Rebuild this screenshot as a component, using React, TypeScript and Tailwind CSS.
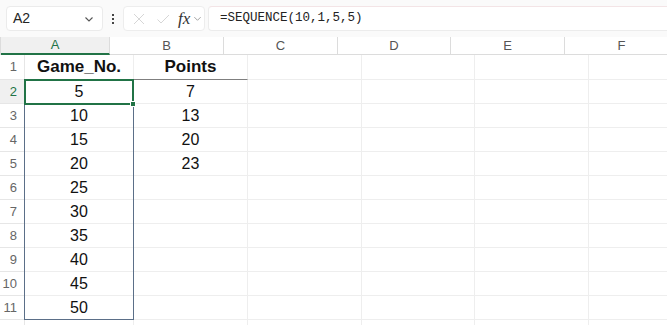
import React from "react";

const cols = [
  { key: "A", w: "w-[109px]" },
  { key: "B", w: "w-[114px]" },
  { key: "C", w: "w-[114px]" },
  { key: "D", w: "w-[113px]" },
  { key: "E", w: "w-[114px]" },
  { key: "F", w: "w-[114px]" },
];

const rows: { n: number; a?: string; b?: string }[] = [
  { n: 1, a: "Game_No.", b: "Points" },
  { n: 2, a: "5", b: "7" },
  { n: 3, a: "10", b: "13" },
  { n: 4, a: "15", b: "20" },
  { n: 5, a: "20", b: "23" },
  { n: 6, a: "25" },
  { n: 7, a: "30" },
  { n: 8, a: "35" },
  { n: 9, a: "40" },
  { n: 10, a: "45" },
  { n: 11, a: "50" },
  { n: 12 },
];

function Toolbar() {
  return (
    <div className="flex h-[37px] items-start bg-[#fafafa] pt-[6px] pl-[6px]">
      <div className="flex h-[25px] w-[97px] items-center justify-between rounded-[4px] border border-[#ebebeb] bg-white pl-[6px] pr-[8px]">
        <span className="text-[14px] text-[#242424]">A2</span>
        <svg width="10" height="10" viewBox="0 0 10 10">
          <path d="M1.5 3.5 L5 7 L8.5 3.5" fill="none" stroke="#555" strokeWidth="1.1" />
        </svg>
      </div>
      <div className="flex h-[25px] w-[20px] flex-col items-center justify-center gap-[2px]">
        <span className="h-[2px] w-[2px] bg-[#444]" />
        <span className="h-[2px] w-[2px] bg-[#444]" />
        <span className="h-[2px] w-[2px] bg-[#444]" />
      </div>
      <div className="flex h-[25px] w-[82px] items-center rounded-[4px] border border-[#ededed] bg-white pl-[8px]">
        <svg width="14" height="14" viewBox="0 0 14 14">
          <path d="M2 2 L12 12 M12 2 L2 12" stroke="#d6d6d6" strokeWidth="1" />
        </svg>
        <svg className="ml-[10px]" width="14" height="14" viewBox="0 0 14 14">
          <path d="M1.5 7.5 L5 11 L13 3" fill="none" stroke="#d6d6d6" strokeWidth="1" />
        </svg>
        <span className="ml-[8px] font-['Liberation_Serif'] text-[17px] italic text-[#333]">fx</span>
        <svg className="ml-[3px]" width="9" height="9" viewBox="0 0 10 10">
          <path d="M1.5 3.5 L5 7 L8.5 3.5" fill="none" stroke="#999" strokeWidth="1" />
        </svg>
      </div>
      <div className="ml-[3px] flex h-[25px] flex-1 items-center rounded-l-[4px] border border-r-0 border-[#ececec] border-t-[#f3e4e6] bg-white pl-[11px]">
        <span className="font-['Liberation_Mono'] text-[12.5px] text-[#222]">=SEQUENCE(10,1,5,5)</span>
      </div>
    </div>
  );
}

function HeaderRow() {
  return (
    <div className="flex h-[18px] bg-white">
      <div className="relative w-[25px] border-r border-b border-[#dcdcdc]">
        <svg className="absolute right-[3px] bottom-[3px]" width="9" height="9" viewBox="0 0 9 9">
          <path d="M9 0 L9 9 L0 9 Z" fill="#e3e3e3" />
        </svg>
      </div>
      {cols.map((c) =>
        c.key === "A" ? (
          <div
            key={c.key}
            className={`${c.w} flex shrink-0 items-center justify-center border-r border-b-2 border-r-[#dcdcdc] border-b-[#217346] bg-[#f0f0f0] text-[13px] text-[#217346]`}
          >
            {c.key}
          </div>
        ) : (
          <div
            key={c.key}
            className={`${c.w} flex shrink-0 items-center justify-center border-r border-b border-[#dcdcdc] text-[13px] text-[#555]`}
          >
            {c.key}
          </div>
        )
      )}
    </div>
  );
}

function Row({ n, a, b }: { n: number; a?: string; b?: string }) {
  const bold = n === 1;
  const sel = n === 2;
  return (
    <div className={`flex ${n === 1 ? "h-[25px]" : "h-[24px]"}`}>
      <div
        className={`flex w-[25px] shrink-0 items-center justify-end border-r border-b pr-[7px] text-[13px] ${
          sel ? "border-r-[#217346] border-b-[#e6e6e6] bg-[#f0f0f0] text-[#217346]" : "border-[#e6e6e6] text-[#666]"
        }`}
      >
        {n < 12 ? n : null}
      </div>
      {cols.map((c) => {
        const v = c.key === "A" ? a : c.key === "B" ? b : undefined;
        const topRule = bold && (c.key === "A" || c.key === "B");
        return (
          <div
            key={c.key}
            className={`${c.w} flex shrink-0 items-center justify-center border-r text-[#111] ${
              topRule ? "border-b border-r-[#eeeeee] border-b-[#7f7f7f]" : "border-b border-[#eeeeee]"
            } ${bold ? "text-[17px] font-bold" : "text-[16px]"}`}
          >
            {v}
          </div>
        );
      })}
    </div>
  );
}

export default function App() {
  return (
    <div className="h-[325px] w-[667px] overflow-hidden bg-white font-['Liberation_Sans',Arial,sans-serif]">
      <Toolbar />
      <div className="relative">
        <HeaderRow />
        {rows.map((r) => (
          <Row key={r.n} {...r} />
        ))}
        {/* spill range outline A2:A11 */}
        <div className="pointer-events-none absolute top-[43px] left-[24px] h-[240px] w-[110px] border border-[#5b6f88]" />
        {/* active cell A2 */}
        <div className="pointer-events-none absolute top-[42px] left-[24px] h-[26px] w-[110px] border-2 border-[#217346]" />
        <div className="pointer-events-none absolute top-[64px] left-[130px] h-[6px] w-[6px] border border-white bg-[#217346]" />
      </div>
    </div>
  );
}
